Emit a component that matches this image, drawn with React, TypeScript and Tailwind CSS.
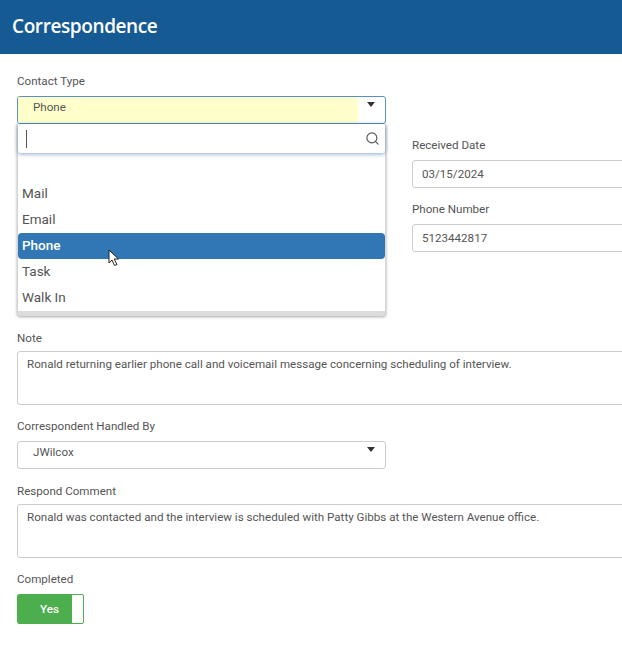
import { Search } from 'lucide-react'

const roboto = { fontFamily: 'Roboto, sans-serif' }

function Label({ children }: { children: string }) {
  return <div className="h-[15px] text-[11.6px] leading-[15px] text-[#555]">{children}</div>
}

function Caret() {
  return (
    <svg width="8" height="5" viewBox="0 0 8 5" className="absolute right-[10px] top-[5px]">
      <path d="M0 0h8L4 5z" fill="#333" />
    </svg>
  )
}

function Cursor() {
  return (
    <svg width="13" height="18" viewBox="0 0 13 18" className="absolute left-[90px] top-[16px]">
      <path d="M1 1v13l3-3 2.5 5.5 2.5-1L6.2 10H10.5z" fill="#fff" stroke="#222" strokeWidth="1" strokeLinejoin="round" />
    </svg>
  )
}

const options = ['Mail', 'Email', 'Phone', 'Task', 'Walk In']

function Dropdown() {
  return (
    <div className="absolute left-0 top-[28px] z-10 w-[369px] rounded-b-[3px] border-x border-[#d4d4d4] bg-[#dcdcdc] pb-[5px] shadow-[0_1px_3px_rgba(0,0,0,0.35)]">
      <div className="bg-white">
        <div className="relative z-10 flex h-[29px] items-center justify-between rounded-[3px] bg-white pl-[8px] pr-[5px] shadow-[0_1px_4px_rgba(40,90,160,0.55)]">
          <div className="h-[18px] w-px bg-[#555]" />
          <Search size={15} strokeWidth={1.8} className="text-[#555]" />
        </div>
        <div className="pt-[28px]">
          {options.map((o) => (
            <div
              key={o}
              className={
                o === 'Phone'
                  ? 'relative h-[26px] rounded-[4px] bg-[#3176b5] pl-[4px] text-[13.5px] font-medium leading-[24px] text-white'
                  : 'h-[26px] pl-[4px] text-[13.5px] leading-[25px] text-[#555]'
              }
            >
              {o}
              {o === 'Phone' && <Cursor />}
            </div>
          ))}
        </div>
      </div>
    </div>
  )
}

export default function App() {
  return (
    <div className="h-[652px] w-[622px] overflow-hidden bg-white" style={roboto}>
      <div className="flex h-[54px] items-center bg-[#155a92] pb-[1px] pl-[12px] text-[19px] font-semibold tracking-[-0.4px] text-white" style={{ fontFamily: '"Open Sans", sans-serif' }}>
        Correspondence
      </div>
      <div className="w-[660px] pl-[17px] pt-[20px]">
        <div className="flex h-[257px] gap-[26px]">
          <div className="w-[369px]">
            <Label>Contact Type</Label>
            <div className="relative mt-[7px]">
              <div className="relative h-[28px] overflow-hidden rounded-[3px] border border-[#5b8fc4] bg-white">
                <div className="h-full w-[340px] bg-[#ffffcc] pl-[15px] text-[11.6px] leading-[20px] text-[#555]">Phone</div>
                <Caret />
              </div>
              <Dropdown />
            </div>
          </div>
          <div className="flex-1 pt-[64px]">
            <Label>Received Date</Label>
            <div className="mb-[14px] mt-[7px] h-[28px] rounded-[3px] border border-[#ccc] pl-[9px] text-[11.6px] leading-[26px] text-[#555]">03/15/2024</div>
            <Label>Phone Number</Label>
            <div className="mt-[7px] h-[28px] rounded-[3px] border border-[#ccc] pl-[9px] text-[11.6px] leading-[26px] text-[#555]">5123442817</div>
          </div>
        </div>
        <Label>Note</Label>
        <div className="mt-[5px] h-[54px] rounded-[3px] border border-[#ccc] pl-[9px] pt-[3px] text-[11.6px] leading-[18px] text-[#555]">
          Ronald returning earlier phone call and voicemail message concerning scheduling of interview.
        </div>
        <div className="mt-[14px]">
          <Label>Correspondent Handled By</Label>
        </div>
        <div className="relative mt-[7px] h-[28px] w-[369px] rounded-[3px] border border-[#ccc] pl-[15px] text-[11.6px] leading-[20px] text-[#555]">
          JWilcox
          <Caret />
        </div>
        <div className="mt-[15px]">
          <Label>Respond Comment</Label>
        </div>
        <div className="mt-[5px] h-[54px] rounded-[3px] border border-[#ccc] pl-[9px] pt-[3px] text-[11.6px] leading-[18px] text-[#555]">
          Ronald was contacted and the interview is scheduled with Patty Gibbs at the Western Avenue office.
        </div>
        <div className="mt-[14px]">
          <Label>Completed</Label>
        </div>
        <div className="mt-[7px] flex h-[30px] w-[67px] overflow-hidden rounded-[2px] border border-[#4cae4c] bg-white">
          <div className="w-[54px] bg-[#4cae4c] pl-[9px] text-center text-[11.6px] font-medium leading-[28px] text-white">Yes</div>
        </div>
      </div>
    </div>
  )
}
